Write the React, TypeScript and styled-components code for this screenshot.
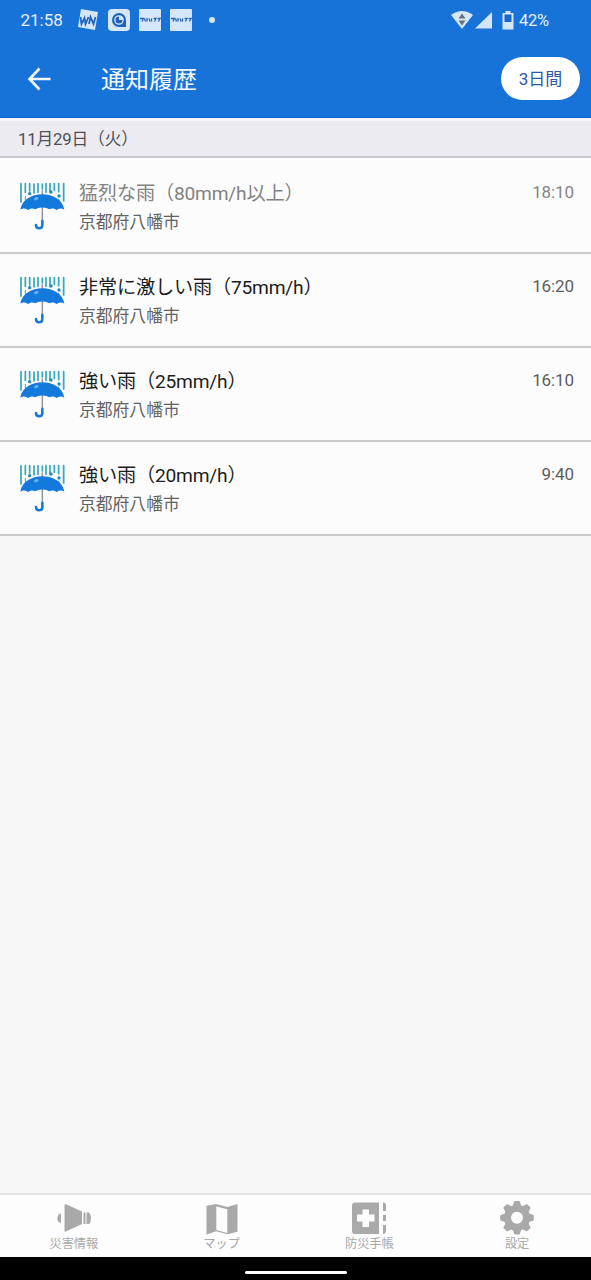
import React from 'react';
import styled, { createGlobalStyle } from 'styled-components';

const GlobalStyle = createGlobalStyle`
  * { box-sizing: border-box; }
  body {
    margin: 0;
    background: #f7f7f7;
    font-family: Roboto, "Noto Sans CJK JP", sans-serif;
  }
`;

const Screen = styled.div`
  display: flex;
  flex-direction: column;
  width: 100%;
  height: 1280px;
  background: #f7f7f7;
  overflow: hidden;
`;

const StatusBar = styled.div`
  display: flex;
  align-items: center;
  height: 40px;
  padding: 0 42px 0 20px;
  background: #1873d9;
  color: #e4effb;
  font-size: 17px;
  svg { display: block; flex: none; }
`;

const Clock = styled.span`
  width: 57px;
  padding-left: 0.5px;
`;

const Notifications = styled.div`
  display: flex;
  align-items: center;
  gap: 9px;
`;

const StatusRight = styled.div`
  display: flex;
  align-items: center;
  margin-left: auto;
`;

const SignalSvg = styled.svg`
  margin: 0 9px 0 2px;
`;

const Percent = styled.span`
  margin-left: 5px;
  font-size: 16.5px;
  letter-spacing: -0.2px;
`;

const AppBar = styled.header`
  display: flex;
  align-items: center;
  height: 78px;
  padding: 0 11px 0 26px;
  background: #1873d9;
  border-bottom: 1px solid #0d66cc;
`;

const Title = styled.h1`
  flex: 1;
  margin: 0 0 0 49px;
  padding-top: 2px;
  color: #f4f9ff;
  font-size: 24px;
  font-weight: 400;
  line-height: 36px;
`;

const RangeButton = styled.button`
  width: 79px;
  height: 43px;
  padding: 2px 0 0;
  border: 0;
  border-radius: 22px;
  background: #fff;
  color: #2b5ba8;
  font: 400 17px/41px Roboto, "Noto Sans CJK JP", sans-serif;
`;

const DateHeader = styled.div`
  height: 40px;
  padding-left: 18px;
  border-top: 3px solid #f5f5fb;
  border-bottom: 2px solid #cacace;
  background: #ebebf1;
  color: #505054;
  font-size: 16.8px;
  letter-spacing: -0.2px;
  line-height: 36px;
`;

const List = styled.ul`
  margin: 0;
  padding: 0;
  list-style: none;
`;

const Row = styled.li<{ $first?: boolean }>`
  display: flex;
  align-items: flex-start;
  height: ${({ $first }) => ($first ? 96 : 94)}px;
  padding: ${({ $first }) => ($first ? 22 : 20)}px 17px 0 19px;
  border-bottom: 2px solid #cbcbcb;
  background: #fcfcfc;
`;

const UmbrellaSvg = styled.svg`
  flex: none;
  width: 47px;
  height: 50px;
  margin-top: 1px;
`;

const RowText = styled.div`
  flex: 1;
  margin-left: 13px;
`;

const RowTitle = styled.div<{ $read?: boolean }>`
  color: ${({ $read }) => ($read ? '#828282' : '#1c1c1c')};
  font-size: 19.2px;
  letter-spacing: -0.2px;
  line-height: 28px;
`;

const Place = styled.div`
  color: #626262;
  font-size: 16.8px;
  line-height: 29px;
`;

const Time = styled.span<{ $read?: boolean }>`
  color: ${({ $read }) => ($read ? '#858585' : '#5c5c5c')};
  font-size: 17px;
  letter-spacing: -0.1px;
  line-height: 24px;
`;

const NavBar = styled.nav`
  display: grid;
  grid-template-columns: repeat(4, 1fr);
  height: 64px;
  margin-top: auto;
  border-top: 2px solid #e4e4e4;
  background: #fdfdfd;
`;

const NavItem = styled.div`
  display: flex;
  flex-direction: column;
  align-items: center;
  padding-top: 5px;
  color: #a8a8a8;
  font-size: 12.2px;
  line-height: 17px;
  svg { display: block; height: 36px; }
`;

const GestureBar = styled.div`
  display: flex;
  justify-content: center;
  height: 23px;
  padding-top: 14px;
  background: #000;
`;

const GestureHandle = styled.div`
  width: 102px;
  height: 3px;
  border-radius: 2px;
  background: #fff;
`;

const RAIN = [
  [34, 40, 95], [47, 40, 66], [60, 40, 62], [73, 41, 68], [85, 40, 66], [98, 41, 56],
  [109, 40, 66], [121, 40, 66], [134, 40, 60], [147, 40, 64], [162, 40, 92],
];

const Umbrella = () => (
  <UmbrellaSvg viewBox="28 32 141 150">
    <g stroke="#35a9c0" strokeWidth="5.200" strokeLinecap="round">
      {RAIN.map(([x, a, b]) => <path key={x} d={`M${x} ${a}V${b}`} />)}
      <path d="M47 78v10M147 86v5" strokeWidth="3" />
    </g>
    <g fill="#258bbb">
      <circle cx="60" cy="70" r="5" />
      <circle cx="124" cy="65" r="5" />
      <circle cx="148" cy="77" r="5" />
    </g>
    <path d="M98 60V162" stroke="#96949e" strokeWidth="4.5" />
    <path d="M98 151v14q0 9-9.500 9T79 164" fill="none" stroke="#1877d3" strokeWidth="7.500" strokeLinecap="round" />
    <path d="M32 118C37 88 66 72 98 72s61 16 66 46c-8-5-15-4-23 1-7-6-15-6-22-2q-10-6-21-5-11-1-21 5c-7-4-15-4-22 2-8-5-15-6-23-1Z" fill="#1479dc" />
    <ellipse cx="80" cy="85" rx="7" ry="4.500" fill="#67b6f1" transform="rotate(-20 80 85)" />
  </UmbrellaSvg>
);

const items = [
  { title: '猛烈な雨（80mm/h以上）', time: '18:10', read: true },
  { title: '非常に激しい雨（75mm/h）', time: '16:20' },
  { title: '強い雨（25mm/h）', time: '16:10' },
  { title: '強い雨（20mm/h）', time: '9:40' },
];

const CardIcon = () => (
  <svg width="22" height="22" viewBox="0 0 22 22">
    <rect width="22" height="22" rx="1" fill="#d5e6fa" />
    <path d="M1 9.500h3.500L3 12.500M5.500 9.500l1 3M8 9v3.500M10 9.500l1 3M12.500 9.500v3M14.500 9.500H17l-1.500 3M18.500 9.500H21l-1.500 3" fill="none" stroke="#2865b2" strokeWidth="1.300" />
  </svg>
);

export default function App() {
  return (
    <>
      <GlobalStyle />
      <Screen>
        <StatusBar>
          <Clock>21:58</Clock>
          <Notifications>
            <svg width="22" height="22" viewBox="0 0 22 22">
              <path d="M4 0L21 3 18 21 1 18Z" fill="#d5e6fa" />
              <path d="M3.500 8l1 7 3-6 1 6 3-7M12 15l1.500-7 3 7L18.500 8" fill="none" stroke="#1f64b8" strokeWidth="1.800" />
            </svg>
            <svg width="22" height="22" viewBox="0 0 22 22">
              <rect width="22" height="22" rx="4" fill="#d5e6fa" />
              <path d="M18 11v7h-7a7 7 0 1 1 7-7Z" fill="#1d63b8" />
              <circle cx="11" cy="11" r="4.800" fill="#d5e6fa" />
              <path d="M11 7.500V11h3.500A3.500 3.500 0 1 1 11 7.500Z" fill="#1d63b8" />
            </svg>
            <CardIcon />
            <CardIcon />
            <svg width="22" height="22" viewBox="0 0 22 22"><circle cx="11" cy="11" r="3" fill="#d5e6fa" /></svg>
          </Notifications>
          <StatusRight>
            <svg width="22" height="18" viewBox="0 0 22 18">
              <path d="M0 4Q11-4 22 4L11 18Z" fill="#d5e6fa" />
              <path d="M11 2.500l3.500 5h-7ZM11 14.500L7.500 9.500h7Z" fill="#66707d" />
            </svg>
            <SignalSvg width="18" height="18" viewBox="0 0 18 18"><path d="M0 17.500L17 1v16.500Z" fill="#d5e6fa" /></SignalSvg>
            <svg width="12" height="20" viewBox="0 0 12 20">
              <path d="M3.500 1h5v2H11.500v16.500H.5V3h3Z" fill="#d5e6fa" />
              <path d="M2.500 4.500h7v7.500h-7Z" fill="#1868c4" />
            </svg>
            <Percent>42%</Percent>
          </StatusRight>
        </StatusBar>
        <AppBar>
          <svg width="26" height="26" viewBox="0 0 26 26" fill="none" stroke="#f2f8ff" strokeWidth="2.600">
            <path d="M24.500 13H4M13.500 2.500L3.500 13l10 10.500" />
          </svg>
          <Title>通知履歴</Title>
          <RangeButton>3日間</RangeButton>
        </AppBar>
        <DateHeader>11月29日（火）</DateHeader>
        <List>
          {items.map((item, i) => (
            <Row key={item.time} $first={i === 0}>
              <Umbrella />
              <RowText>
                <RowTitle $read={item.read}>{item.title}</RowTitle>
                <Place>京都府八幡市</Place>
              </RowText>
              <Time $read={item.read}>{item.time}</Time>
            </Row>
          ))}
        </List>
        <NavBar>
          <NavItem>
            <svg width="36" viewBox="0 0 36 36" fill="#a9a9a9">
              <path d="M8.500 5Q8.500 3.800 10 4.300L26 11.500v12.500L10 31.500q-1.500.5-1.500-.5Z" />
              <path d="M5 13.500v9.500C.2 22.500.2 14 5 13.500ZM27.500 12.500h2v11.500h-2ZM30.500 12.500h2.500q2 2 2 5.750T33 24h-2.500Z" />
            </svg>
            災害情報
          </NavItem>
          <NavItem>
            <svg width="32" viewBox="0 0 32 36" fill="#a9a9a9">
              <path d="M.5 5.700L10 4l11.500 3L31.500 4V31.700L21.500 34.300 10 31.300.5 34.700ZM10.300 6.500v23.500L21.300 33V9.300Z" fillRule="evenodd" />
            </svg>
            マップ
          </NavItem>
          <NavItem>
            <svg width="34" viewBox="0 0 34 36" fill="#a9a9a9">
              <path d="M3 2.500H27V34H3Q0 34 0 31V5.500Q0 2.500 3 2.500ZM10.500 9.500V14.500H5v7h5.500V27h6.500v-5.500h5.500V14.500H17V9.500Z" fillRule="evenodd" />
              <path d="M31 2.500h1Q34 3 34 5v6h-3ZM31 15h3v6h-3ZM31 25h3v6q0 2-2 3h-1Z" />
            </svg>
            防災手帳
          </NavItem>
          <NavItem>
            <svg width="34" viewBox="0 0 34 36">
              <g fill="#a9a9a9" transform="translate(0 .8)">
                <circle cx="17" cy="17" r="13" />
                {[0, 45, 90, 135, 180, 225, 270, 315].map((angle) => (
                  <path key={angle} d="M12.500 6L14 1.300Q14.200.2 15 .2h4q.8 0 1 1.100L21.500 6Z" transform={`rotate(${angle} 17 17)`} />
                ))}
              </g>
              <circle cx="17" cy="17.800" r="6" fill="#fdfdfd" />
            </svg>
            設定
          </NavItem>
        </NavBar>
        <GestureBar><GestureHandle /></GestureBar>
      </Screen>
    </>
  );
}
